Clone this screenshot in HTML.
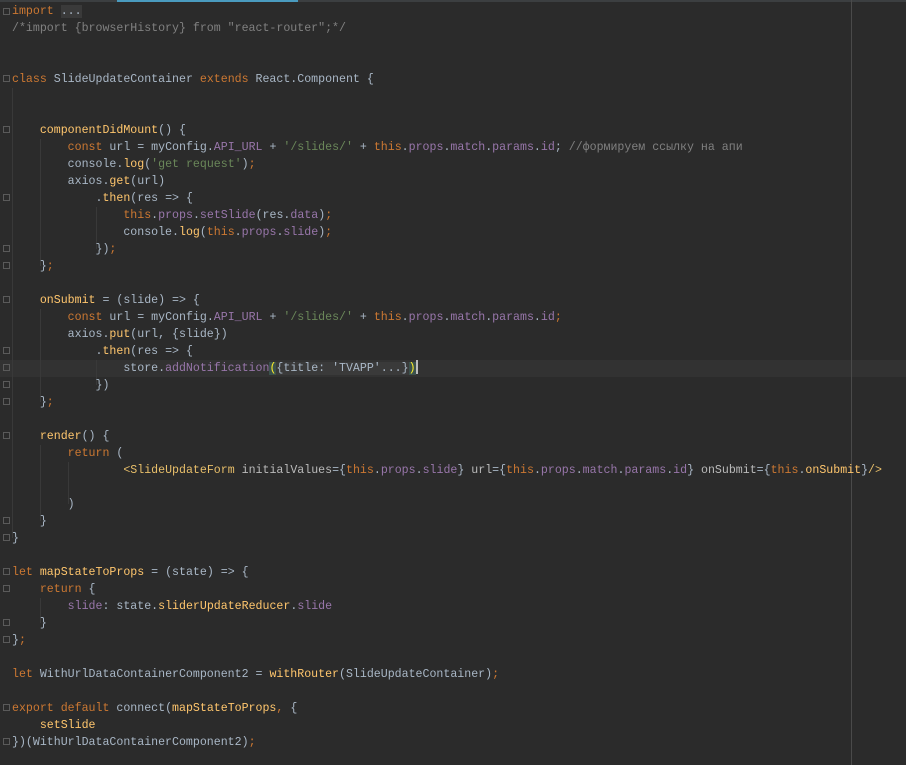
<!DOCTYPE html>
<html><head><meta charset="utf-8"><style>
body{margin:0;width:906px;height:765px;background:#2b2b2b;overflow:hidden;position:relative;font-family:"Liberation Mono",monospace;font-size:11.6px;color:#a9b7c6}
.top{position:absolute;left:0;top:0;width:906px;height:2px;background:#3c3f41}
.tab{position:absolute;left:117px;top:0;width:181px;height:2px;background:#4a9bbf}
.margin{position:absolute;left:851px;top:0;width:1px;height:765px;background:#4a4a4a}
.hl{position:absolute;left:0;top:360px;width:906px;height:17px;background:#323232}
.gut{position:absolute;left:0;top:0;width:1px;height:765px;background:#3a3a3a}
pre{margin:0;position:absolute;left:12px;top:3px;font:inherit;line-height:17px;white-space:pre}
.k{color:#cc7832}.s{color:#6a8759}.c{color:#808080}.f{color:#ffc66d}.p{color:#9876aa}.t{color:#e8bf6a}
.ig{position:absolute;width:1px;background:#393939}
.fold{position:absolute;left:3px;width:7px;height:7px;border:1px solid #5a5a5a;box-sizing:border-box}
.caret{display:inline-block;width:2px;height:14px;background:#bbb;vertical-align:-3px}
.br{background:#3b514d;color:#ffef28}
</style></head><body>
<div class="top"></div><div class="tab"></div>
<div class="hl"></div>
<div class="margin"></div>
<div class="ig" style="left:12px;top:88px;height:450px"></div>
<div class="ig" style="left:40px;top:139px;height:127px"></div>
<div class="ig" style="left:40px;top:309px;height:93px"></div>
<div class="ig" style="left:40px;top:445px;height:76px"></div>
<div class="ig" style="left:68px;top:462px;height:42px"></div>
<div class="ig" style="left:96px;top:207px;height:42px"></div>
<div class="ig" style="left:96px;top:360px;height:25px"></div>
<div class="ig" style="left:40px;top:598px;height:25px"></div>
<div class="fold" style="top:8px"></div>
<div class="fold" style="top:75px"></div>
<div class="fold" style="top:126px"></div>
<div class="fold" style="top:194px"></div>
<div class="fold" style="top:245px"></div>
<div class="fold" style="top:262px"></div>
<div class="fold" style="top:296px"></div>
<div class="fold" style="top:347px"></div>
<div class="fold" style="top:364px"></div>
<div class="fold" style="top:381px"></div>
<div class="fold" style="top:398px"></div>
<div class="fold" style="top:432px"></div>
<div class="fold" style="top:517px"></div>
<div class="fold" style="top:534px"></div>
<div class="fold" style="top:568px"></div>
<div class="fold" style="top:585px"></div>
<div class="fold" style="top:619px"></div>
<div class="fold" style="top:636px"></div>
<div class="fold" style="top:704px"></div>
<div class="fold" style="top:738px"></div>
<pre><span class="k">import</span> <span style="background:#3a3a3a">...</span>
<span class="c">/*import {browserHistory} from "react-router";*/</span>


<span class="k">class</span> SlideUpdateContainer <span class="k">extends</span> React.Component {


    <span class="f">componentDidMount</span>() {
        <span class="k">const</span> url = myConfig.<span class="p">API_URL</span> + <span class="s">'/slides/'</span> + <span class="k">this</span>.<span class="p">props</span>.<span class="p">match</span>.<span class="p">params</span>.<span class="p">id</span>; <span class="c">//формируем ссылку на апи</span>
        console.<span class="f">log</span>(<span class="s">'get request'</span>)<span class="k">;</span>
        axios.<span class="f">get</span>(url)
            .<span class="f">then</span>(res =&gt; {
                <span class="k">this</span>.<span class="p">props</span>.<span class="p">setSlide</span>(res.<span class="p">data</span>)<span class="k">;</span>
                console.<span class="f">log</span>(<span class="k">this</span>.<span class="p">props</span>.<span class="p">slide</span>)<span class="k">;</span>
            })<span class="k">;</span>
    }<span class="k">;</span>

    <span class="f">onSubmit</span> = (slide) =&gt; {
        <span class="k">const</span> url = myConfig.<span class="p">API_URL</span> + <span class="s">'/slides/'</span> + <span class="k">this</span>.<span class="p">props</span>.<span class="p">match</span>.<span class="p">params</span>.<span class="p">id</span><span class="k">;</span>
        axios.<span class="f">put</span>(url, {slide})
            .<span class="f">then</span>(res =&gt; {
                store.<span class="p">addNotification</span><span class="br">(</span><span style="background:#3a3a3a">{title: 'TVAPP'...}</span><span class="br">)</span><span class="caret"></span>
            })
    }<span class="k">;</span>

    <span class="f">render</span>() {
        <span class="k">return</span> (
                <span class="t">&lt;SlideUpdateForm</span> <span style="color:#bababa">initialValues</span>={<span class="k">this</span>.<span class="p">props</span>.<span class="p">slide</span>} <span style="color:#bababa">url</span>={<span class="k">this</span>.<span class="p">props</span>.<span class="p">match</span>.<span class="p">params</span>.<span class="p">id</span>} <span style="color:#bababa">onSubmit</span>={<span class="k">this</span>.<span class="f">onSubmit</span>}<span class="t">/&gt;</span>

        )
    }
}

<span class="k">let</span> <span class="f">mapStateToProps</span> = (state) =&gt; {
    <span class="k">return</span> {
        <span class="p">slide</span>: state.<span class="f">sliderUpdateReducer</span>.<span class="p">slide</span>
    }
}<span class="k">;</span>

<span class="k">let</span> WithUrlDataContainerComponent2 = <span class="f">withRouter</span>(SlideUpdateContainer)<span class="k">;</span>

<span class="k">export default</span> connect(<span class="f">mapStateToProps</span><span class="k">,</span> {
    <span class="f">setSlide</span>
})(WithUrlDataContainerComponent2)<span class="k">;</span>
</pre>
</body></html>
